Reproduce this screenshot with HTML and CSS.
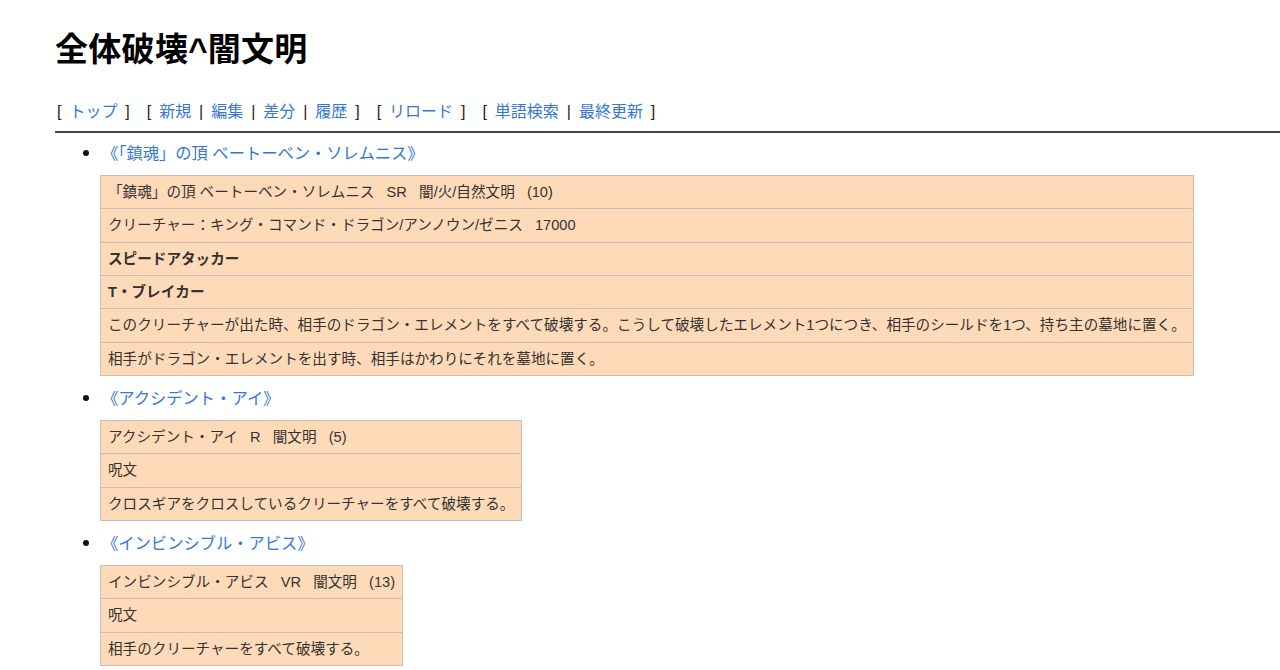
FILE: index.html
```html
<!DOCTYPE html>
<html lang="ja">

<head>
    <meta charset="UTF-8">
    <title>全体破壊^闇文明</title>
    <link rel="stylesheet" href="styles.css">
</head>

<body>
    <div class="page">
        <h1 class="title">全体破壊^闇文明</h1>

        <div class="navigator">
            <span class="group">[ <a href="#">トップ</a> ]</span>
            <span class="group">[ <a href="#">新規</a> | <a href="#">編集</a> | <a href="#">差分</a> | <a href="#">履歴</a> ]</span>
            <span class="group">[ <a href="#">リロード</a> ]</span>
            <span class="group">[ <a href="#">単語検索</a> | <a href="#">最終更新</a> ]</span>
        </div>
        <hr class="line">

        <ul class="cards">
            <li>
                <a href="#">《「鎮魂」の頂 ベートーベン・ソレムニス》</a>
                <table class="card">
                    <tr><td>「鎮魂」の頂 ベートーベン・ソレムニス&nbsp;&nbsp; SR &nbsp; 闇/火/自然文明 &nbsp;&nbsp;(10)</td></tr>
                    <tr><td>クリーチャー：キング・コマンド・ドラゴン/アンノウン/ゼニス&nbsp;&nbsp; 17000</td></tr>
                    <tr><td class="bold">スピードアタッカー</td></tr>
                    <tr><td class="bold">T・ブレイカー</td></tr>
                    <tr><td>このクリーチャーが出た時、相手のドラゴン・エレメントをすべて破壊する。こうして破壊したエレメント1つにつき、相手のシールドを1つ、持ち主の墓地に置く。</td></tr>
                    <tr><td>相手がドラゴン・エレメントを出す時、相手はかわりにそれを墓地に置く。</td></tr>
                </table>
            </li>
            <li>
                <a href="#">《アクシデント・アイ》</a>
                <table class="card">
                    <tr><td>アクシデント・アイ&nbsp;&nbsp; R &nbsp; 闇文明 &nbsp;&nbsp;(5)</td></tr>
                    <tr><td>呪文</td></tr>
                    <tr><td>クロスギアをクロスしているクリーチャーをすべて破壊する。</td></tr>
                </table>
            </li>
            <li>
                <a href="#">《インビンシブル・アビス》</a>
                <table class="card">
                    <tr><td>インビンシブル・アビス&nbsp;&nbsp; VR &nbsp;&nbsp;闇文明 &nbsp;&nbsp;(13)</td></tr>
                    <tr><td>呪文</td></tr>
                    <tr><td>相手のクリーチャーをすべて破壊する。</td></tr>
                </table>
            </li>
        </ul>
    </div>
</body>

</html>
```

FILE: styles.css
```css
* {
    box-sizing: border-box;
}

body {
    margin: 0;
    background-color: #fff;
    color: #222;
    font-family: "Liberation Sans", "Noto Sans CJK JP", sans-serif;
    font-size: 14px;
}

a {
    color: #3478d4;
    text-decoration: none;
}

.page {
    padding: 26px 0 0 55px;
}

.title {
    margin: 0;
    font-size: 33px;
    line-height: 48px;
    font-weight: bold;
    color: #000;
    letter-spacing: 0.3px;
}

.navigator {
    margin-top: 28px;
    font-size: 16px;
    line-height: 20px;
    padding-left: 2px;
    color: #222;
    word-spacing: 3.5px;
}

.group {
    margin-right: 9px;
}

.line {
    margin: 9px 0 0;
    border: 0;
    height: 2px;
    background-color: #444;
}

.cards {
    margin: 10px 0 0;
    padding-left: 47px;
    list-style: none;
}

.cards li {
    position: relative;
    line-height: 20px;
    font-size: 16.3px;
}

/* bullet */
.cards li::before {
    content: "";
    position: absolute;
    left: -19px;
    top: 7px;
    width: 6px;
    height: 6px;
    border-radius: 50%;
    background-color: #111;
}

.card {
    border-collapse: collapse;
    background-color: #ffdab9;
    margin: 12px 0 12px -2px;
    font-size: 14.6px;
    color: #333;
}

.card td {
    border: 1px solid #c8c0b8;
    padding: 6px 7px;
    line-height: 20.33px;
    white-space: nowrap;
}

.bold {
    font-weight: bold;
}
```
